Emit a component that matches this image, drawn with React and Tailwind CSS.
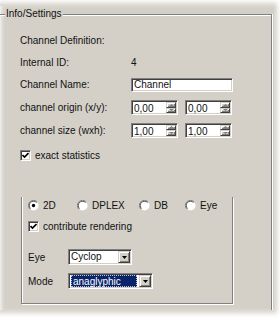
import React from 'react';

const sunken =
  'bg-white border border-t-[#808080] border-l-[#808080] border-b-white border-r-white shadow-[inset_1px_1px_0_#404040,inset_-1px_-1px_0_#d4d0c8]';
const raised =
  'bg-[#d4d0c8] border border-t-[#d4d0c8] border-l-[#d4d0c8] border-b-[#404040] border-r-[#404040] shadow-[inset_1px_1px_0_#ffffff,inset_-1px_-1px_0_#808080]';

function Arrow({ up, color = '#000', w = 7, h = 4 }) {
  return (
    <svg width={w} height={h} viewBox={`0 0 ${w} ${h}`} className="block">
      {up ? (
        <polygon points={`${w / 2},0 ${w},${h} 0,${h}`} fill={color} />
      ) : (
        <polygon points={`0,0 ${w},0 ${w / 2},${h}`} fill={color} />
      )}
    </svg>
  );
}

function Spin({ value }) {
  return (
    <div className={`${sunken} w-[47px] h-[15px] flex`}>
      <span className="flex-1 pl-[2px] leading-[13px] pt-[1px]">{value}</span>
      <div className="w-[11px] flex flex-col py-[1px] pr-[1px]">
        <div className={`${raised} flex-1 flex items-center justify-center`}>
          <Arrow up color="#808080" w={5} h={2} />
        </div>
        <div className={`${raised} flex-1 flex items-center justify-center`}>
          <Arrow color="#808080" w={5} h={2} />
        </div>
      </div>
    </div>
  );
}

function Check({ label }) {
  return (
    <div className="flex items-center gap-[4px]">
      <div className={`${sunken} w-[11px] h-[11px] flex items-center justify-center`}>
        <svg width="7" height="7" viewBox="0 0 7 7" className="block">
          <path d="M0.5 3 L2.5 5 L6.5 1" stroke="#000" strokeWidth="1.6" fill="none" />
        </svg>
      </div>
      <span>{label}</span>
    </div>
  );
}

function Radio({ label, checked, width }) {
  return (
    <div className={`flex items-center gap-[4px] ${width}`}>
      <svg width="11" height="11" viewBox="0 0 12 12" className="block shrink-0">
        <circle cx="6" cy="6" r="5.5" fill="#fff" />
        <path d="M10 2 A5.5 5.5 0 0 0 2 10" stroke="#808080" strokeWidth="1" fill="none" />
        <path d="M9.3 2.7 A4.5 4.5 0 0 0 2.7 9.3" stroke="#404040" strokeWidth="1" fill="none" />
        {checked && <circle cx="6" cy="6" r="1.8" fill="#000" />}
      </svg>
      <span>{label}</span>
    </div>
  );
}

function Select({ value, width, selected }) {
  return (
    <div className={`${sunken} ${width} h-[16px] flex p-[1px]`}>
      <div className="flex-1 flex items-center pl-[1px] pr-[2px]">
        {selected ? (
          <span className="flex-1 h-[12px] leading-[11px] bg-[#0a246a] text-white border border-dotted border-[#b8c4e8] pl-[1px]">
            {value}
          </span>
        ) : (
          <span className="leading-[12px]">{value}</span>
        )}
      </div>
      <div className={`${raised} w-[12px] flex items-center justify-center`}>
        <Arrow w={5} h={3} />
      </div>
    </div>
  );
}

export default function App() {
  return (
    <div
      className="w-[280px] h-[321px] bg-white overflow-hidden pt-[6px] text-[10px] text-[#111]"
      style={{ fontFamily: '"Liberation Sans", Arial, sans-serif' }}
    >
      <div className="relative w-[274px] h-[304px] bg-[#d4d0c8] overflow-hidden shadow-[0_0_5px_3px_#d4d0c8,inset_3px_0_4px_-2px_#ffffff] pt-[8px]">
        {/* Info/Settings frame */}
        <div className="relative w-[272px] h-[320px] border-t border-r border-[#808080] shadow-[inset_0_1px_0_#ffffff,1px_0_0_#ffffff] pl-[20px] pt-[14px]">
          <span className="absolute -top-[7px] left-[5px] bg-[#d4d0c8] px-[1px] leading-[12px]">
            Info/Settings
          </span>

          <div className="h-[22px] flex items-center">Channel Definition:</div>
          <div className="h-[22px] flex items-center">
            <span className="w-[111px]">Internal ID:</span>
            <span>4</span>
          </div>
          <div className="h-[23px] flex items-center">
            <span className="w-[111px]">Channel Name:</span>
            <div className={`${sunken} w-[102px] h-[14px] pl-[2px] leading-[12px]`}>Channel</div>
          </div>
          <div className="h-[23px] flex items-center">
            <span className="w-[111px]">channel origin (x/y):</span>
            <div className="flex gap-[7px]">
              <Spin value="0,00" />
              <Spin value="0,00" />
            </div>
          </div>
          <div className="h-[22px] flex items-center">
            <span className="w-[111px]">channel size (wxh):</span>
            <div className="flex gap-[7px]">
              <Spin value="1,00" />
              <Spin value="1,00" />
            </div>
          </div>
          <div className="h-[28px] flex items-center">
            <Check label="exact statistics" />
          </div>

          {/* inner group */}
          <div className="mt-[28px] ml-[1px] w-[212px] h-[107px] border-l border-r border-b border-[#808080] shadow-[inset_1px_0_0_#ffffff,1px_1px_0_#ffffff] pl-[6px]">
            <div className="h-[16px] flex items-center">
              <Radio label="2D" checked width="w-[49px]" />
              <Radio label="DPLEX" width="w-[62px]" />
              <Radio label="DB" width="w-[46px]" />
              <Radio label="Eye" />
            </div>
            <div className="h-[26px] flex items-center">
              <Check label="contribute rendering" />
            </div>
            <div className="mt-[7px] h-[22px] flex items-center">
              <span className="w-[40px]">Eye</span>
              <Select value="Cyclop" width="w-[64px]" />
            </div>
            <div className="mt-[2px] h-[22px] flex items-center">
              <span className="w-[40px]">Mode</span>
              <Select value="anaglyphic" width="w-[85px]" selected />
            </div>
          </div>
        </div>
      </div>
    </div>
  );
}
